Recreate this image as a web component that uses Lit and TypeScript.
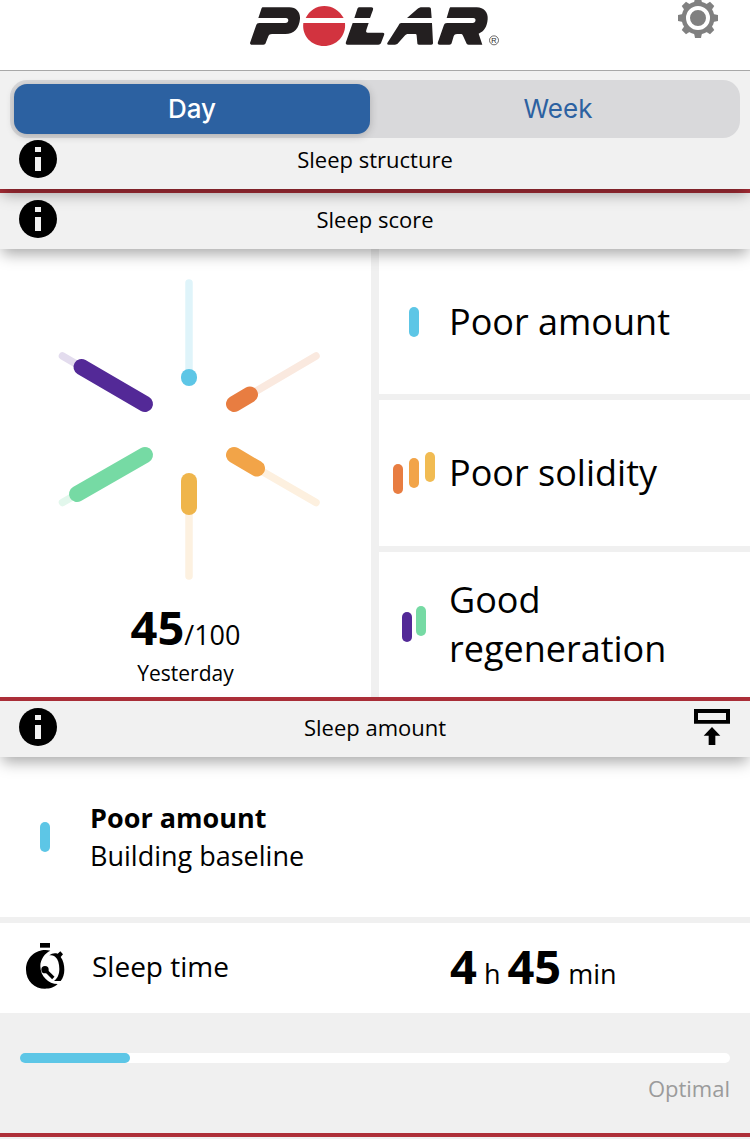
import { LitElement, html, svg, css } from "lit";
import { customElement, property, state } from "lit/decorators.js";

type Point = [number, number];

interface Spoke {
  name: string;
  color: string;
  track: string;
  inner: Point;
  value: Point;
  tip: Point;
}

const BLUE = "#5dc6e6";
const RUST = "#e87d41";
const AMBER = "#f2a448";
const GOLD = "#f1bb52";
const VIOLET = "#532997";
const MINT = "#76daa4";

const SPOKES: Spoke[] = [
  { name: "Sleep time", color: BLUE, track: "#dff4fa", inner: [189, 377], value: [189, 378], tip: [189, 283] },
  { name: "Long interruptions", color: RUST, track: "#fae9df", inner: [234, 404], value: [250, 394.5], tip: [316, 356] },
  { name: "Continuity", color: AMBER, track: "#fdf0df", inner: [234, 455], value: [257, 468.5], tip: [316, 502.5] },
  { name: "Actual sleep", color: "#efb54b", track: "#fdf1e0", inner: [189, 481], value: [189, 507], tip: [189, 576] },
  { name: "Deep sleep", color: MINT, track: "#e2f7ec", inner: [145, 455], value: [77, 494], tip: [62.5, 502.5] },
  { name: "REM sleep", color: VIOLET, track: "#e3dcee", inner: [145, 404], value: [81.5, 367], tip: [62.5, 356] },
];

/* Small group of rising pill bars. */
@customElement("score-bars")
class ScoreBars extends LitElement {
  @property({ attribute: false }) colors: string[] = [];
  @property({ type: Number }) step = 16;

  static styles = css`
    :host {
      display: block;
      line-height: 0;
    }
  `;

  render() {
    const n = this.colors.length;
    const width = (n - 1) * this.step + 10;
    const height = (n - 1) * 6 + 30;
    return html`<svg width=${width} height=${height} viewBox="0 0 ${width} ${height}" aria-hidden="true">
      ${this.colors.map(
        (c, i) => svg`<rect x=${i * this.step} y=${(n - 1 - i) * 6} width="10" height="30" rx="5" fill=${c}></rect>`
      )}
    </svg>`;
  }
}

/* Grey title strip of a section, with an info button and an optional collapse button. */
@customElement("section-head")
class SectionHead extends LitElement {
  @property() title = "";
  @property({ type: Boolean }) collapsible = false;

  static styles = css`
    :host {
      display: grid;
      grid-template-columns: 40px 1fr 40px;
      align-items: center;
      position: relative;
      box-sizing: border-box;
      height: 56px;
      padding: 0 18px 4px;
      background: #f1f1f1;
      box-shadow: 0 7px 14px -2px rgba(0, 0, 0, 0.34);
    }
    .title {
      margin: 0;
      font-size: 22px;
      font-weight: 400;
      line-height: 30px;
      text-align: center;
    }
    .icon {
      display: grid;
      place-items: center;
      width: 40px;
      height: 40px;
      padding: 0;
      border: 0;
      background: none;
    }
  `;

  render() {
    return html`
      <button class="icon" aria-label="About ${this.title}">
        <svg width="38" height="38" viewBox="0 0 38 38">
          <circle cx="19" cy="19" r="19" fill="#000" />
          <path d="M16 7h6v5h-6zM16 17h6v14h-6z" fill="#f1f1f1" />
        </svg>
      </button>
      <h2 class="title">${this.title}</h2>
      ${this.collapsible
        ? html`<button class="icon" aria-label="Collapse">
            <svg width="36" height="36" viewBox="0 0 108 108">
              <path
                fill-rule="evenodd"
                d="M0 0H108V44H0ZM12 12V33H96V12ZM54 54L79 80H64V108H44V80H29Z"
              />
            </svg>
          </button>`
        : ""}
    `;
  }
}

@customElement("app-root")
class AppRoot extends LitElement {
  @state() private range = "Day";

  static styles = css`
    :host {
      display: block;
      min-height: 100vh;
      background: #f0f0f0;
      color: #000;
      font-family: "Open Sans", "Noto Sans", sans-serif;
    }
    .top {
      position: sticky;
      top: 0;
      z-index: 5;
      background: #f1f1f1;
    }
    .brand {
      display: grid;
      grid-template-columns: 1fr auto 1fr;
      align-items: start;
      height: 70px;
      padding: 0 32px;
      background: #fff;
      border-bottom: 1px solid #a8a8a8;
    }
    .logo {
      grid-column: 2;
      line-height: 0;
    }
    .settings {
      justify-self: end;
      padding: 0;
      border: 0;
      background: none;
      line-height: 0;
    }
    .tab-wrap {
      padding-top: 9px;
    }
    .tabs {
      display: grid;
      grid-template-columns: 1fr 1fr;
      gap: 10px;
      margin: 0 10px;
      padding: 4px;
      background: #d9d9db;
      border-radius: 17px;
    }
    .tab {
      height: 50px;
      padding: 0;
      border: 0;
      border-radius: 13px;
      background: none;
      color: #2c61a1;
      font: 400 26px/50px Inter, sans-serif;
    }
    .tab.active {
      background: #2c61a1;
      color: #fff;
      font-weight: 500;
      box-shadow: 0 2px 8px rgba(0, 0, 0, 0.2);
    }
    .first {
      margin-top: -5px;
    }
    section-head {
      z-index: 1;
    }
    .first section-head {
      z-index: 2;
    }
    .ruled {
      border-top: 4px solid #ae2f39;
    }
    .score {
      display: grid;
      grid-template-columns: 1fr 1fr;
      gap: 8px;
    }
    .total {
      padding-bottom: 6px;
      background: #fff;
      text-align: center;
    }
    .wheel {
      display: block;
      width: 300px;
      height: 350px;
      margin: 0 auto;
    }
    .points {
      font-size: 27px;
      line-height: 30px;
    }
    .strong {
      font-size: 47px;
      font-weight: 700;
      line-height: 56px;
    }
    .when {
      font-size: 21px;
      line-height: 36px;
    }
    .themes {
      display: grid;
      grid-auto-rows: 1fr;
      gap: 6px;
    }
    .theme {
      display: grid;
      grid-template-columns: 70px 1fr;
      align-items: center;
      background: #fff;
      font-size: 36px;
      line-height: 49px;
    }
    .theme score-bars,
    .summary score-bars {
      justify-self: center;
    }
    .summary {
      display: grid;
      grid-template-columns: 90px 1fr;
      align-items: center;
      padding: 42px 0;
      background: #fff;
      font-size: 27px;
      line-height: 38px;
    }
    .heading {
      font-weight: 700;
    }
    .time {
      display: grid;
      grid-template-columns: 60% 40%;
      align-items: center;
      box-sizing: border-box;
      height: 90px;
      margin-top: 6px;
      padding-bottom: 4px;
      background: #fff;
    }
    .label {
      display: flex;
      align-items: center;
      gap: 27px;
      padding-left: 25px;
      font-size: 28px;
      line-height: 38px;
    }
    .duration {
      font-size: 27px;
      line-height: 30px;
    }
    .meter-area {
      padding: 40px 20px 30px;
    }
    .meter {
      height: 10px;
      border-radius: 5px;
      background: #fff;
    }
    .fill {
      height: 10px;
      border-radius: 5px;
      background: #5dc6e6;
    }
    .goal {
      padding-top: 10px;
      color: #9b9b9b;
      font-size: 22px;
      line-height: 30px;
      text-align: right;
    }
  `;

  private renderLogo() {
    return html`<svg width="250" height="50" viewBox="60 0 750 150" role="img" aria-label="Polar">
      <g fill="#231f20">
        <path
          d="M99 22H178C200 22 211 38 210 56C208 84 192 102 166 102H126C120 102 117 104 115 109L107 129C106 132 104 134 100 134H66C61 134 59 131 61 126L78 77C80 71 83 69 88 69H166C177 69 178 54 168 54H85L94 27C95 24 96 22 99 22Z"
        />
        <path d="M389 22H424C429 22 430 25 429 29L420 54H373L382 27C383 24 385 22 389 22Z" />
        <path
          d="M368 69H416L409 90C407 96 409 98 413 98H458C463 98 464 101 462 106L453 129C451 133 449 134 445 134H353C348 134 346 131 348 126Z"
        />
        <path d="M576 22H597C602 22 603 25 603 29L605 54H531L562 27C566 24 570 22 576 22Z" />
        <path
          d="M514 69H606L609 129C609 133 607 134 604 134H567C563 134 562 132 562 129L560 107C560 103 558 102 554 102H535C530 102 527 104 524 107L504 130C501 133 498 134 495 134H476C471 134 470 131 474 126L505 77C508 71 510 69 514 69Z"
        />
        <path
          d="M662 22H740C762 22 775 37 773 58C771 80 763 94 746 101L757 134H716C712 134 710 133 709 129L699 107C697 103 695 102 692 102H681C676 102 673 104 671 109L665 129C664 132 662 134 658 134H629C624 134 622 131 624 126L641 77C643 71 646 69 651 69H728C738 69 740 54 730 54H650L658 27C659 24 660 22 662 22Z"
        />
      </g>
      <path d="M227 54C238 32 259 18 283 18S329 32 341 54ZM220 69H345C349 108 319 138 282 138S215 108 220 69Z" fill="#d2333f" />
      <circle cx="792" cy="121" r="13.500" fill="none" stroke="#231f20" stroke-width="2" />
      <text x="792" y="129" text-anchor="middle" font-size="22" font-family="Liberation Sans, sans-serif" fill="#231f20">R</text>
    </svg>`;
  }

  private renderGear() {
    return html`<svg width="40" height="38" viewBox="-20 -18 40 38">
      <g fill="#808080">
        ${[0, 45, 90, 135].map(
          (a) => svg`<path d="M-4 -15L-3 -20H3L4 -15V15L3 20H-3L-4 15Z" transform="rotate(${a})"></path>`
        )}
        <circle r="16.500" />
        <circle r="10" fill="#808080" stroke="#fff" stroke-width="4" />
      </g>
    </svg>`;
  }

  private renderWheel() {
    const line = (a: Point, b: Point, color: string, w: number) =>
      svg`<line x1=${a[0]} y1=${a[1]} x2=${b[0]} y2=${b[1]} stroke=${color} stroke-width=${w} stroke-linecap="round"></line>`;
    return html`<svg class="wheel" viewBox="36 249 300 350" role="img" aria-label="Sleep score components">
      ${SPOKES.map((s) => [line(s.inner, s.tip, s.track, 7.5), line(s.inner, s.value, s.color, 16)])}
    </svg>`;
  }

  private renderTimer() {
    return html`<svg width="40" height="50" viewBox="75 120 120 150" aria-hidden="true">
      <path d="M120 126H150V140H120Z" />
      <path
        d="M151 149C121 140 78 160 78 206C78 240 104 263 135 263C148 263 162 260 173 249C145 249 121 226 121 195C121 175 135 156 151 149Z"
      />
      <path
        d="M148 163C155 157 164 155 173 158L181 151L189 160L182 168C190 179 193 192 193 206C193 219 189 231 182 240H162C175 230 178 217 178 204C178 188 174 175 166 168C161 164 155 163 148 163Z"
      />
      <circle cx="135" cy="206" r="11" />
      <path d="M135 206L160 231" stroke="#000" stroke-width="10" />
    </svg>`;
  }

  render() {
    const progress = 15.5;
    return html`
      <header class="top">
        <div class="brand">
          <div class="logo">${this.renderLogo()}</div>
          <button class="settings" aria-label="Settings">${this.renderGear()}</button>
        </div>
        <div class="tab-wrap">
          <div class="tabs" role="tablist">
            ${["Day", "Week"].map(
              (name) => html`<button
                class="tab ${this.range === name ? "active" : ""}"
                role="tab"
                aria-selected=${this.range === name}
                @click=${() => (this.range = name)}
              >${name}</button>`
            )}
          </div>
        </div>
      </header>

      <main>
        <section class="first">
          <section-head .title=${"Sleep structure"}></section-head>
        </section>

        <section class="ruled">
          <section-head .title=${"Sleep score"}></section-head>
          <div class="score">
            <div class="total">
              ${this.renderWheel()}
              <div class="points"><span class="strong">45</span>/100</div>
              <div class="when">Yesterday</div>
            </div>
            <div class="themes">
              <div class="theme"><score-bars .colors=${[BLUE]}></score-bars><span>Poor amount</span></div>
              <div class="theme"><score-bars .colors=${[RUST, AMBER, GOLD]}></score-bars><span>Poor solidity</span></div>
              <div class="theme">
                <score-bars .colors=${[VIOLET, MINT]} .step=${14}></score-bars><span>Good regeneration</span>
              </div>
            </div>
          </div>
        </section>

        <section class="ruled">
          <section-head .title=${"Sleep amount"} collapsible></section-head>
          <div class="summary">
            <score-bars .colors=${[BLUE]}></score-bars>
            <div>
              <div class="heading">Poor amount</div>
              <div>Building baseline</div>
            </div>
          </div>
          <div class="time">
            <div class="label">${this.renderTimer()}<span>Sleep time</span></div>
            <div class="duration"><span class="strong">4</span> h <span class="strong">45</span> min</div>
          </div>
          <div class="meter-area">
            <div class="meter" role="meter" aria-label="Sleep time" aria-valuemin="0" aria-valuemax="100" aria-valuenow=${progress}>
              <div class="fill" style="width:${progress}%"></div>
            </div>
            <div class="goal">Optimal</div>
          </div>
        </section>
        <section class="ruled"></section>
      </main>
    `;
  }
}
